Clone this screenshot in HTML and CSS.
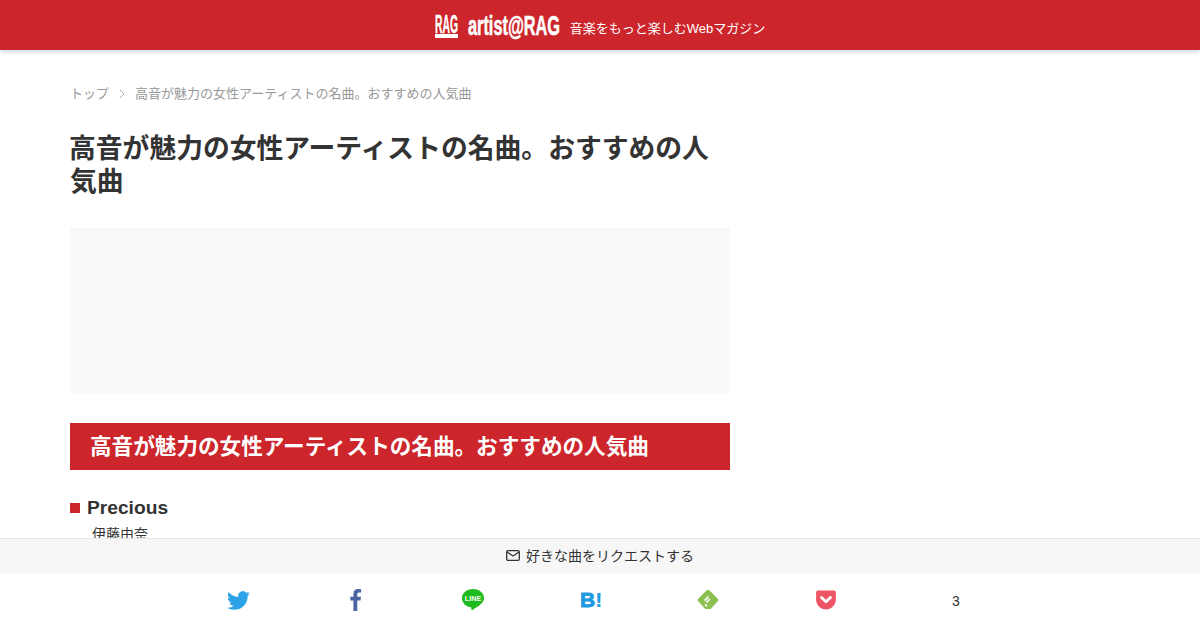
FILE: index.html
```html
<!DOCTYPE html>
<html lang="ja">
<head>
    <meta charset="UTF-8">
    <meta name="viewport" content="width=device-width, initial-scale=1.0">
    <title>高音が魅力の女性アーティストの名曲。おすすめの人気曲</title>
    <link rel="stylesheet" href="styles.css">
</head>
<body>
    <header class="site-header">
        <a class="logo" href="#">
            <span class="logo-mark"><span class="logo-mark-text">RAG</span></span>
            <span class="logo-name"><span class="logo-name-text">artist@RAG</span></span>
        </a>
        <span class="tagline">音楽をもっと楽しむWebマガジン</span>
    </header>

    <main class="content">
        <nav class="breadcrumb">
            <a href="#">トップ</a>
            <svg class="crumb-arrow" width="6" height="10" viewBox="0 0 6 10"><path d="M1 1l4 4-4 4"/></svg>
            <span>高音が魅力の女性アーティストの名曲。おすすめの人気曲</span>
        </nav>

        <h1>高音が魅力の女性アーティストの名曲。おすすめの人気曲</h1>

        <div class="ad-slot"></div>

        <h2>高音が魅力の女性アーティストの名曲。おすすめの人気曲</h2>

        <h3 class="song-title">Precious</h3>
        <p class="song-artist">伊藤由奈</p>
    </main>

    <div class="bottom-bar">
        <a class="request" href="#">
            <svg class="mail-icon" width="14" height="11" viewBox="0 0 14 11"><rect x="0.7" y="0.7" width="12.6" height="9.6" rx="1.2"/><path d="M1 2l6 4 6-4"/></svg>
            好きな曲をリクエストする
        </a>
        <div class="share">
            <a class="share-item" href="#">
                <svg width="23" height="23" viewBox="0 0 24 24"><path fill="#2ca3e6" d="M23.953 4.57a10 10 0 01-2.825.775 4.958 4.958 0 002.163-2.723c-.951.555-2.005.959-3.127 1.184a4.92 4.92 0 00-8.384 4.482C7.69 8.095 4.067 6.13 1.64 3.162a4.822 4.822 0 00-.666 2.475c0 1.71.87 3.213 2.188 4.096a4.904 4.904 0 01-2.228-.616v.06a4.923 4.923 0 003.946 4.827 4.996 4.996 0 01-2.212.085 4.936 4.936 0 004.604 3.417 9.867 9.867 0 01-6.102 2.105c-.39 0-.779-.023-1.17-.067a13.995 13.995 0 007.557 2.209c9.053 0 13.998-7.496 13.998-13.985 0-.21 0-.42-.015-.63A9.935 9.935 0 0024 4.59z"/></svg>
            </a>
            <a class="share-item" href="#">
                <svg width="12" height="24" viewBox="0 0 12 24"><path fill="#4c65a3" d="M3.4 23V12.6H0.3V8.8h3.1V6c0-3.2 1.9-5 4.8-5 1.3 0 2.5.1 3 .2v3.4H9.2c-1.6 0-1.9.8-1.9 1.9v2.3h3.7l-.5 3.8H7.3V23z"/></svg>
            </a>
            <a class="share-item" href="#">
                <svg width="24" height="24" viewBox="0 0 24 24"><path fill="#1dbb1d" d="M12 1C5.7 1 1 5 1 10.200c0 4.500 3.600 8.200 8.600 9 .9.200.9.500.8 1.100-.1.700-.2 1.500.2 1.700.5.200 1.300-.4 2.300-1 3.800-2.300 10.100-6 10.100-10.800C23 5 18.300 1 12 1z"/><text class="line-text" x="12" y="13" font-size="7.200" text-anchor="middle">LINE</text></svg>
            </a>
            <a class="share-item" href="#">
                <svg class="hatena" width="24" height="24" viewBox="0 0 24 24"><text x="1" y="19" font-size="21">B<tspan class="hatena-mark">!</tspan></text></svg>
            </a>
            <a class="share-item" href="#">
                <svg width="24" height="24" viewBox="0 0 24 24"><path fill="#8cc152" d="M10.400 2.500a2.200 2.200 0 013.200 0l8 8a2.200 2.200 0 010 3.100l-6.900 7.400H9.300l-6.900-7.400a2.200 2.200 0 010-3.100z"/><path fill="none" stroke="#fff" stroke-width="1.700" d="M8.600 12.600L12.500 8.700M10.500 14.300L13.800 11"/><path fill="#fff" d="M10 15.800l1.500 1.500-1.500 1.500-1.500-1.500z"/></svg>
            </a>
            <a class="share-item" href="#">
                <svg width="24" height="24" viewBox="0 0 24 24"><path fill="#ee5565" d="M4 2.500h16c1 0 1.900.9 1.900 1.900v7.100c0 5.500-4.400 9.900-9.900 9.900s-9.900-4.400-9.900-9.900V4.400c0-1 .9-1.900 1.900-1.900z"/><path fill="none" stroke="#fff" stroke-width="2.800" stroke-linecap="round" stroke-linejoin="round" d="M7.500 9.500l4.500 4.300 4.500-4.300"/></svg>
            </a>
            <span class="share-count">3</span>
        </div>
    </div>
</body>
</html>
```

FILE: styles.css
```css
* {
    box-sizing: border-box;
}
body {
    margin: 0;
    font-family: "Liberation Sans", "Noto Sans CJK JP", sans-serif;
    color: #333;
    background-color: #fff;
}
a {
    color: inherit;
    text-decoration: none;
}
.site-header {
    height: 50px;
    display: flex;
    align-items: center;
    justify-content: center;
    gap: 10px;
    background-color: #cc252b;
    box-shadow: 0 1px 5px rgba(40, 40, 110, 0.25);
    color: #fff;
}
.logo {
    display: flex;
    align-items: center;
    gap: 10px;
    margin-top: 2px;
    font-weight: bold;
    white-space: nowrap;
}
/* fixed boxes, the wide bold text is squeezed into them */
.logo-mark {
    display: block;
    width: 23px;
    height: 23px;
    padding-bottom: 4px;
    border-bottom: 4px solid #fff;
}
.logo-mark-text {
    display: block;
    font-size: 25px;
    line-height: 19px;
    -webkit-text-stroke: 0.4px #fff;
    transform: scaleX(0.414);
    transform-origin: 0 50%;
}
.logo-name {
    display: block;
    width: 92px;
    height: 24px;
}
.logo-name-text {
    display: block;
    font-size: 27px;
    line-height: 24px;
    -webkit-text-stroke: 0.6px #fff;
    transform: scaleX(0.604);
    transform-origin: 0 50%;
}
.tagline {
    font-size: 13px;
    margin-top: 4px;
}
.content {
    width: 660px;
    margin-left: 70px;
    padding-top: 35px;
}
.breadcrumb {
    display: flex;
    align-items: center;
    gap: 9px;
    font-size: 13px;
    line-height: 18px;
    color: #999;
}
.crumb-arrow {
    margin: 0 1px;
}
.crumb-arrow path {
    fill: none;
    stroke: #aaa;
    stroke-width: 1;
}
h1 {
    margin: 30px 0 0;
    font-size: 26.8px;
    line-height: 33px;
    color: #333;
    text-indent: -1px;
}
.ad-slot {
    height: 165px;
    margin-top: 29px;
    background-color: #f9f9f9;
}
h2 {
    height: 47px;
    margin: 30px 0 0;
    padding-left: 20px;
    font-size: 21.6px;
    line-height: 47px;
    color: #fff;
    background-color: #cc252b;
}
.song-title {
    margin: 26px 0 0;
    font-size: 19.2px;
    line-height: 24px;
    color: #333;
}
.song-title::before {
    content: "";
    display: inline-block;
    width: 10px;
    height: 10px;
    margin: 0 7px 1px 0;
    background-color: #cc252b;
}
.song-artist {
    margin: 3px 0 0 22px;
    font-size: 14px;
    line-height: 22px;
}
.bottom-bar {
    position: fixed;
    left: 0;
    right: 0;
    bottom: 0;
    background-color: #fff;
}
.request {
    height: 36px;
    display: flex;
    align-items: center;
    justify-content: center;
    gap: 6px;
    padding-bottom: 3px;
    font-size: 14px;
    color: #333;
    background-color: #f7f7f7;
    border-top: 1px solid #e6e6e6;
}
.mail-icon {
    fill: none;
    stroke: #333;
    stroke-width: 1.3;
}
.share {
    height: 56px;
    display: grid;
    grid-template-columns: repeat(6, 117.5px) 143px;
    padding-left: 179.5px;
    align-items: center;
}
.share-item {
    display: flex;
    justify-content: center;
    margin-top: -4px;
}
.hatena {
    fill: #1e9be0;
    stroke: #1e9be0;
    stroke-width: 0.9;
    font-weight: bold;
}
.hatena-mark {
    stroke-width: 0.2;
}
.line-text {
    fill: #fff;
    font-weight: bold;
}
.share-count {
    font-size: 14px;
    text-align: center;
    color: #333;
    margin-top: -2px;
}
```
